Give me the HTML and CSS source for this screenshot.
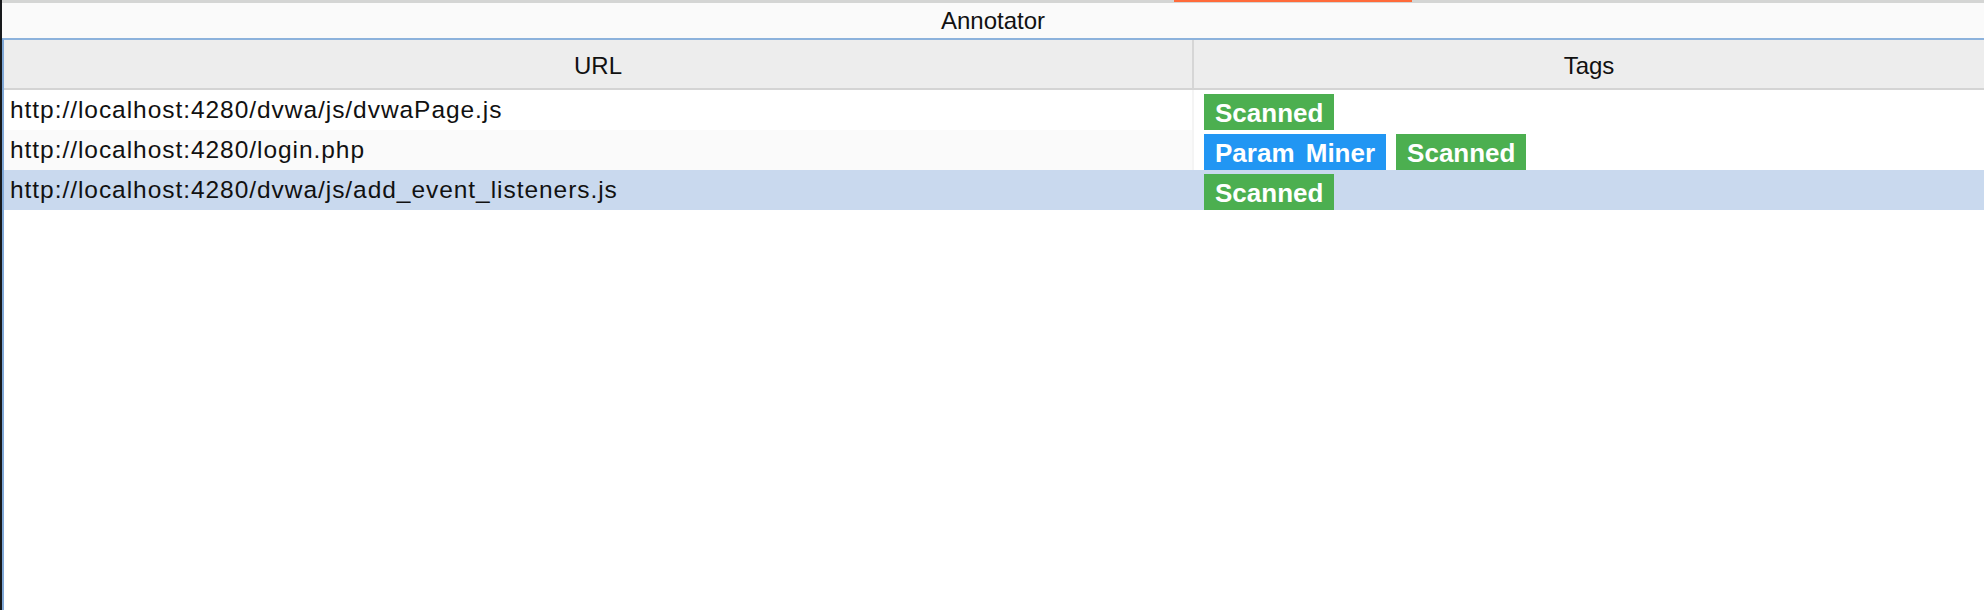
FILE: index.html
```html
<!DOCTYPE html>
<html>
<head>
<meta charset="utf-8">
<link rel="stylesheet" href="styles.css">
</head>
<body>
<div class="edge"></div>
<div class="panel">
  <div class="topbar"><div class="tab-indicator"></div></div>
  <div class="title">Annotator</div>
  <div class="table">
    <div class="row head">
      <div class="cell url">URL</div>
      <div class="cell tags">Tags</div>
    </div>
    <div class="row">
      <div class="cell url">http://localhost:4280/dvwa/js/dvwaPage.js</div>
      <div class="cell tags"><span class="tag green">Scanned</span></div>
    </div>
    <div class="row alt">
      <div class="cell url">http://localhost:4280/login.php</div>
      <div class="cell tags"><span class="tag blue">Param Miner</span><span class="tag green">Scanned</span></div>
    </div>
    <div class="row selected">
      <div class="cell url">http://localhost:4280/dvwa/js/add_event_listeners.js</div>
      <div class="cell tags"><span class="tag green">Scanned</span></div>
    </div>
  </div>
</div>
</body>
</html>
```

FILE: styles.css
```css
html, body {
  margin: 0;
  padding: 0;
  height: 610px;
  overflow: hidden;
  background: #ffffff;
  font-family: "Liberation Sans", Arial, sans-serif;
  color: #111111;
}
body {
  display: flex;
}
.edge {
  width: 2px;
  background: #17191c;
  flex: none;
}
.panel {
  flex: 1;
  display: flex;
  flex-direction: column;
  min-width: 0;
}
.topbar {
  height: 3px;
  background: #d4d5d4;
  display: flex;
  flex: none;
}
.tab-indicator {
  margin-left: 1172px;
  width: 238px;
  height: 2px;
  background: #ff6a3a;
}
.title {
  height: 35px;
  flex: none;
  background: #fafafa;
  font-size: 24px;
  line-height: 35px;
  text-align: center;
}
.table {
  flex: 1;
  border-top: 2px solid #8cb2dc;
  border-left: 2px solid #7fa7d6;
  background: #ffffff;
}
.row {
  display: grid;
  grid-template-columns: 1190px 1fr;
  height: 40px;
}
.cell {
  display: flex;
  align-items: center;
  white-space: nowrap;
  overflow: hidden;
}
.row .url {
  padding: 0 0 1px 6px;
  font-size: 24.5px;
  letter-spacing: 0.95px;
  border-right: 2px solid #f4f4f4;
}
.row.head {
  height: 48px;
  background: #ededed;
  border-bottom: 2px solid #d4d4d4;
}
.row.head .cell {
  justify-content: center;
  align-items: center;
  padding: 3px 0 0 0;
  font-size: 24px;
  letter-spacing: 0;
}
.row.head .url {
  border-right: 2px solid #d6d6d6;
}
.row.alt .url {
  background: #fafafa;
}
.row.selected {
  background: #c9d9ee;
}
.row.selected .url {
  border-right-color: #c9d9ee;
}
.tags {
  padding: 4px 0 0 10px;
  align-items: stretch;
  gap: 10px;
}
.tag {
  display: flex;
  align-items: center;
  padding: 2px 11px 0;
  font-size: 26px;
  font-weight: bold;
  color: #ffffff;
  word-spacing: 4px;
}
.tag.green {
  background: #4caf50;
}
.tag.blue {
  background: #2196f3;
}
```
